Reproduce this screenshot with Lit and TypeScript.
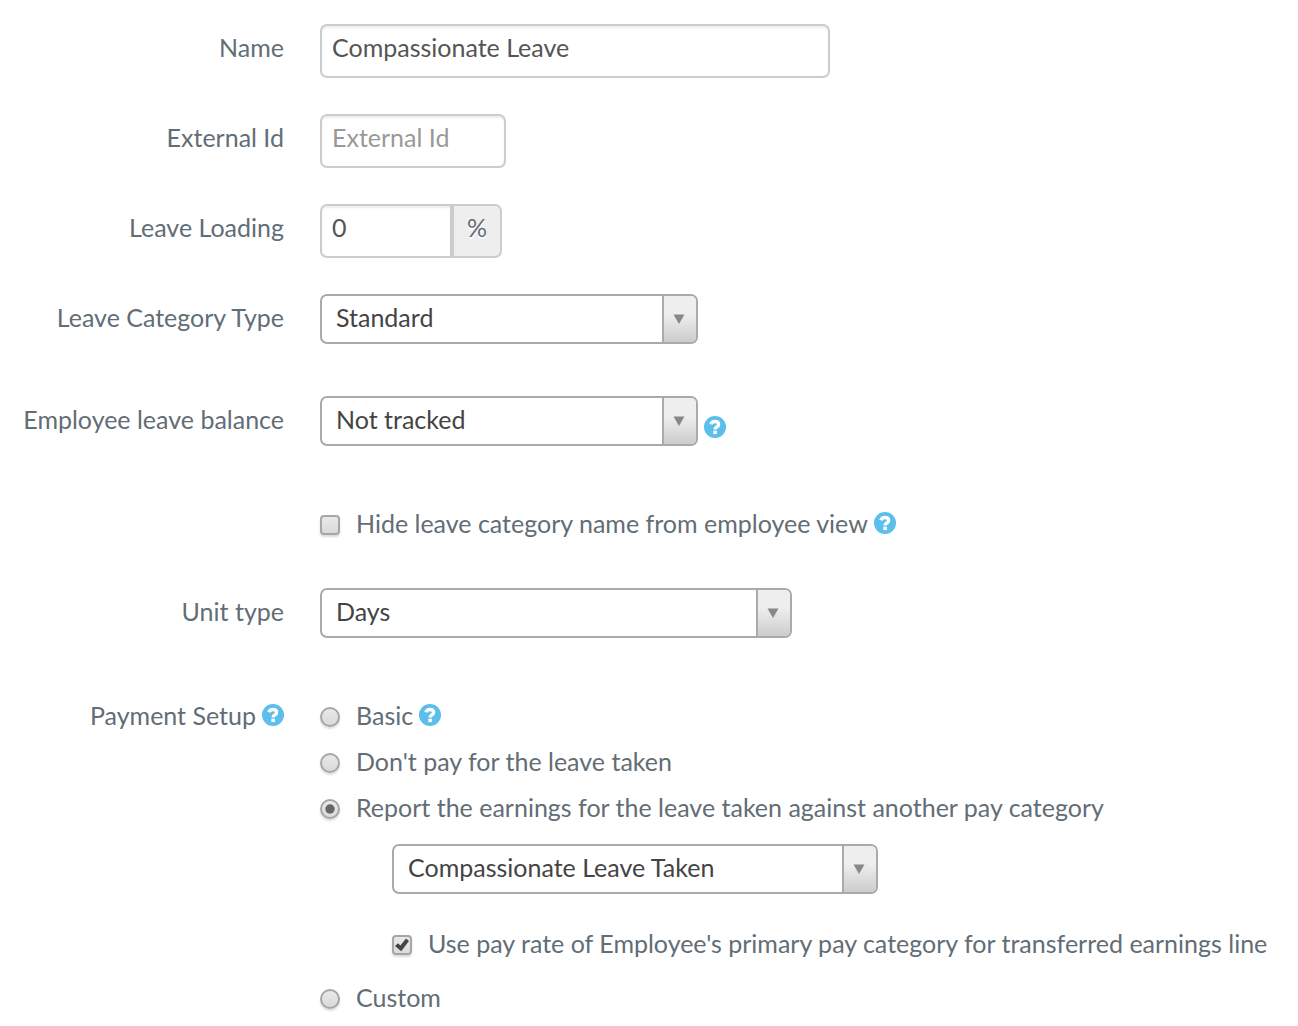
import { LitElement, html, css, svg, nothing } from "lit";
import { customElement, state } from "lit/decorators.js";

type Payment = "basic" | "none" | "report" | "custom";

@customElement("app-root")
export class AppRoot extends LitElement {
  @state() private payment: Payment = "report";

  static styles = css`
    :host {
      display: block;
      background: #fff;
      color: #626d76;
      font-family: Lato, "Liberation Sans", sans-serif;
      font-size: 25px;
      line-height: 46px;
    }
    * {
      box-sizing: border-box;
    }
    .form {
      display: flex;
      flex-direction: column;
      gap: 36px;
      padding: 24px 16px 0 0;
    }
    .row {
      display: grid;
      grid-template-columns: 284px minmax(0, 1fr);
      column-gap: 36px;
      align-items: start;
    }
    .spaced {
      margin-top: 16px;
    }
    .section {
      margin-top: 18px;
    }
    .caption {
      display: flex;
      justify-content: flex-end;
      align-items: center;
      gap: 6px;
      white-space: nowrap;
    }
    .field {
      display: flex;
      align-items: center;
      gap: 6px;
      min-width: 0;
    }
    .solo {
      min-height: 54px;
      padding-bottom: 4px;
    }
    .text {
      height: 54px;
      max-width: 100%;
      margin: 0;
      padding: 0 10px 8px;
      border: 2px solid #ccc;
      border-radius: 7px;
      background: #fff;
      box-shadow: inset 0 2px 2px rgba(0, 0, 0, 0.07);
      color: #555;
      font: inherit;
    }
    .text::placeholder {
      color: #999;
      opacity: 1;
    }
    .name {
      width: 510px;
    }
    .external {
      width: 186px;
    }
    .group {
      display: flex;
    }
    .loading {
      width: 132px;
      border-radius: 7px 0 0 7px;
    }
    .unit {
      width: 50px;
      height: 54px;
      border: 2px solid #ccc;
      border-radius: 0 7px 7px 0;
      background: #eee;
      line-height: 42px;
      text-align: center;
      text-shadow: 0 2px 0 #fff;
    }
    .picker {
      display: grid;
      grid-template-columns: minmax(0, 1fr) 34px;
      height: 50px;
      max-width: 100%;
      border: 2px solid #aaa;
      border-radius: 7px;
      overflow: hidden;
      background: #fff;
    }
    .medium {
      width: 378px;
    }
    .wide {
      width: 472px;
    }
    .wider {
      width: 486px;
    }
    .select {
      grid-area: 1 / 1 / 2 / 3;
      appearance: none;
      width: 100%;
      height: 46px;
      margin: 0;
      padding: 0 48px 4px 14px;
      border: 0;
      background: transparent;
      color: #444;
      font: inherit;
      line-height: 42px;
    }
    .toggle {
      grid-area: 1 / 2 / 2 / 3;
      display: flex;
      align-items: center;
      justify-content: center;
      padding-right: 2px;
      border-left: 2px solid #aaa;
      background: linear-gradient(#eee 40%, #ccc);
      pointer-events: none;
    }
    .help {
      display: flex;
      flex: none;
      width: 22px;
      height: 22px;
      padding: 0;
      border: 0;
      background: none;
      cursor: pointer;
    }
    .low {
      align-self: flex-end;
      margin-bottom: 8px;
    }
    .choice {
      display: flex;
      align-items: center;
      gap: 6px;
    }
    .option {
      display: flex;
      align-items: center;
      gap: 16px;
    }
    .mark {
      display: grid;
      flex: none;
      place-items: center;
      padding-top: 4px;
    }
    .box {
      grid-area: 1 / 1;
      appearance: none;
      width: 20px;
      height: 20px;
      margin: 0;
      border: 2px solid #a6a6a6;
      border-radius: 4px;
      background: linear-gradient(#e9e9e9, #dadada);
      box-shadow: 0 2px 2px rgba(0, 0, 0, 0.14);
    }
    .round {
      border-radius: 50%;
    }
    .glyph {
      grid-area: 1 / 1;
      visibility: hidden;
      pointer-events: none;
    }
    .box:checked + .glyph {
      visibility: visible;
    }
    .nested {
      display: flex;
      flex-direction: column;
      gap: 26px;
      padding: 14px 0 8px 72px;
    }
    .payments {
      min-width: 0;
    }
  `;

  private help(about: string, extra = "") {
    return html`<button class="help ${extra}" type="button" aria-label="Help: ${about}">
      <svg width="22" height="22" viewBox="0 0 22 22" aria-hidden="true">
        <circle cx="11" cy="11" r="11" fill="#5bbeec" />
        <path d="M6.800 8.200C7.500 6.200 9 5.500 11 5.500c2.200 0 3.600 1.200 3.600 2.900 0 2.700-3.500 2.200-3.500 5" fill="none" stroke="#fff" stroke-width="3.400" />
        <rect x="9.300" y="14.700" width="3.600" height="3.400" fill="#fff" />
      </svg>
    </button>`;
  }

  private picker(id: string, size: string, value: string, label?: string) {
    return html`<div class="picker ${size}">
      <select class="select" id=${id} aria-label=${label ?? nothing}>
        <option selected>${value}</option>
      </select>
      <span class="toggle">
        <svg width="12" height="10" viewBox="0 0 12 10" aria-hidden="true">
          <path d="M0.500 0.500h11L6 10z" fill="#888" />
        </svg>
      </span>
    </div>`;
  }

  private check(text: string, checked: boolean) {
    return html`<label class="option">
      <span class="mark">
        <input class="box" type="checkbox" .checked=${checked} />
        <svg class="glyph" width="16" height="16" viewBox="0 0 16 16" aria-hidden="true">
          ${svg`<path d="M1 8.900L4 6.200L6.400 8.600L12 1.600L15 4L7.200 14.200Z" fill="#444" />`}
        </svg>
      </span>
      <span>${text}</span>
    </label>`;
  }

  private radio(value: Payment, text: string) {
    return html`<label class="option">
      <span class="mark">
        <input
          class="box round"
          type="radio"
          name="payment"
          value=${value}
          .checked=${this.payment === value}
          @change=${() => (this.payment = value)}
        />
        <svg class="glyph" width="10" height="10" viewBox="0 0 10 10" aria-hidden="true">
          <circle cx="5" cy="5" r="4.700" fill="#666" />
        </svg>
      </span>
      <span>${text}</span>
    </label>`;
  }

  render() {
    return html`<form class="form" @submit=${(e: Event) => e.preventDefault()}>
      <div class="row">
        <label class="caption" for="name">Name</label>
        <div class="field"><input class="text name" id="name" type="text" value="Compassionate Leave" /></div>
      </div>
      <div class="row">
        <label class="caption" for="external">External Id</label>
        <div class="field"><input class="text external" id="external" type="text" placeholder="External Id" /></div>
      </div>
      <div class="row">
        <label class="caption" for="loading">Leave Loading</label>
        <div class="group">
          <input class="text loading" id="loading" type="text" value="0" />
          <span class="unit">%</span>
        </div>
      </div>
      <div class="row">
        <label class="caption" for="category">Leave Category Type</label>
        <div class="field">${this.picker("category", "medium", "Standard")}</div>
      </div>
      <div class="row spaced">
        <label class="caption" for="balance">Employee leave balance</label>
        <div class="field">
          ${this.picker("balance", "medium", "Not tracked")} ${this.help("Employee leave balance", "low")}
        </div>
      </div>
      <div class="row spaced">
        <span></span>
        <div class="field solo">
          ${this.check("Hide leave category name from employee view", false)}
          ${this.help("Hide leave category name")}
        </div>
      </div>
      <div class="row">
        <label class="caption" for="unit">Unit type</label>
        <div class="field">${this.picker("unit", "wide", "Days")}</div>
      </div>
      <div class="row section" role="radiogroup" aria-labelledby="payment-label">
        <div class="caption"><span id="payment-label">Payment Setup</span>${this.help("Payment Setup")}</div>
        <div class="payments">
          <div class="choice">${this.radio("basic", "Basic")} ${this.help("Basic")}</div>
          <div class="choice">${this.radio("none", "Don't pay for the leave taken")}</div>
          <div class="choice">
            ${this.radio("report", "Report the earnings for the leave taken against another pay category")}
          </div>
          <div class="nested">
            ${this.picker("pay-category", "wider", "Compassionate Leave Taken", "Pay category")}
            <div class="choice">
              ${this.check("Use pay rate of Employee's primary pay category for transferred earnings line", true)}
            </div>
          </div>
          <div class="choice">${this.radio("custom", "Custom")}</div>
        </div>
      </div>
    </form>`;
  }
}
